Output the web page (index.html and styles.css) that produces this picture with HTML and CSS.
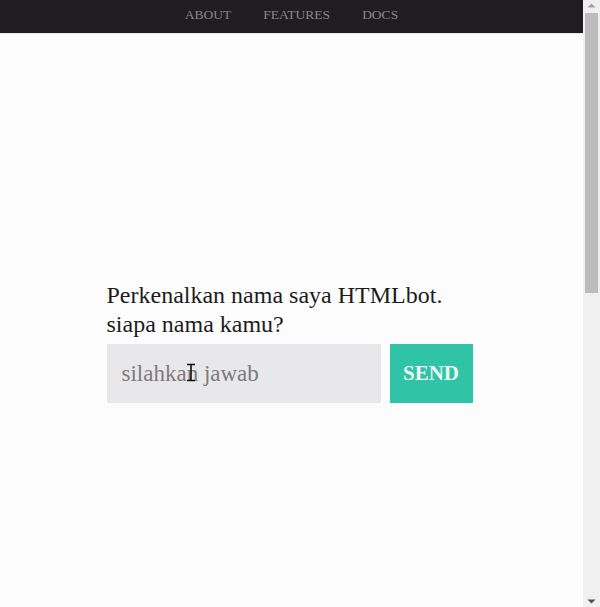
FILE: index.html
```html
<!DOCTYPE html>
<html lang="id">
<head>
<meta charset="utf-8">
<title>HTMLbot</title>
<link rel="stylesheet" href="styles.css">
</head>
<body>
<div class="page">
  <div class="content">
    <nav class="topnav">
      <a href="#" class="navlink">ABOUT</a>
      <a href="#" class="navlink">FEATURES</a>
      <a href="#" class="navlink">DOCS</a>
    </nav>
    <main class="stage">
      <section class="chat">
        <p class="question">Perkenalkan nama saya HTMLbot.<br>siapa nama kamu?</p>
        <form class="answer">
          <div class="field">
            <input class="input" type="text" placeholder="silahkan jawab">
            <svg class="cursor" width="12" height="19" viewBox="0 0 12 19"><path d="M2 1.5h8M6 1.5v16M2 17.5h8" stroke="#111" stroke-width="1.6" fill="none"/></svg>
          </div>
          <button class="send" type="button">SEND</button>
        </form>
      </section>
    </main>
  </div>
  <aside class="scrollbar" aria-hidden="true">
    <svg class="arrow" width="17" height="11" viewBox="0 0 17 11"><path d="M4.5 7.5h8L8.5 3.5z" fill="#a3a2a3"/></svg>
    <div class="thumb"></div>
    <div class="track-rest"></div>
    <svg class="arrow" width="17" height="11" viewBox="0 0 17 11"><path d="M4.5 3.5h8L8.5 7.5z" fill="#505050"/></svg>
  </aside>
</div>
</body>
</html>
```
FILE: styles.css
```css
html, body { margin: 0; padding: 0; }
body {
  background: #fdfcfd;
  font-family: "Liberation Serif", "DejaVu Serif", serif;
  color: #1c1c1c;
  overflow: hidden;
}
.page {
  display: flex;
  height: 607px;
}
.content {
  flex: 1;
  display: flex;
  flex-direction: column;
}
.topnav {
  height: 34px;
  background: #1f1d1f;
  border-bottom: 1px solid #e9e7ea;
  display: flex;
  justify-content: center;
  align-items: center;
  gap: 32px;
  padding-bottom: 3px;
  box-sizing: border-box;
  flex-shrink: 0;
}
.navlink {
  color: #8a888a;
  text-decoration: none;
  font-size: 13.5px;
}
.stage {
  flex: 1;
  display: flex;
  justify-content: center;
  padding-top: 247px;
  padding-right: 4px;
  box-sizing: border-box;
}
.chat { width: 366px; }
.question {
  margin: 0 0 5px;
  font-size: 24px;
  line-height: 29px;
}
.answer { display: flex; gap: 9px; margin: 0; }
.field { position: relative; width: 274px; }
.input {
  width: 100%;
  height: 59px;
  box-sizing: border-box;
  border: none;
  background: #e8e7e9;
  padding: 0 15px;
  font-family: inherit;
  font-size: 23px;
  color: #333;
  outline: none;
}
.input::placeholder { color: #7d7b7d; }
.cursor { position: absolute; left: 78px; top: 19px; }
.send {
  width: 83px;
  height: 59px;
  border: none;
  background: #2ec4a5;
  color: #eef5f3;
  font-family: inherit;
  font-weight: bold;
  font-size: 21px;
  padding: 0;
}
.scrollbar {
  width: 17px;
  flex-shrink: 0;
  background: #f1f0f1;
  display: flex;
  flex-direction: column;
  align-items: center;
}
.arrow { display: block; flex-shrink: 0; }
.thumb {
  width: 13px;
  height: 280px;
  margin-top: 2px;
  background: #bdbcbd;
  flex-shrink: 0;
}
.track-rest { flex: 1; }
```
